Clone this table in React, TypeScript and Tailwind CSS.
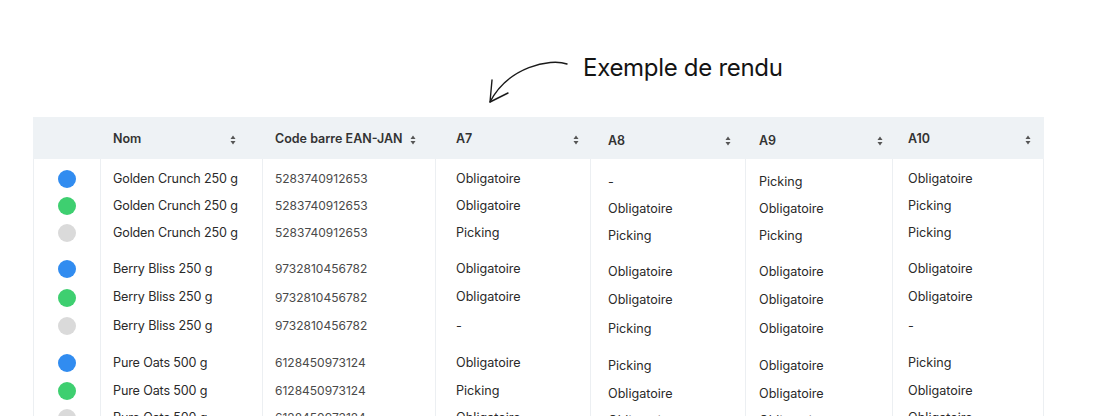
const rows = [
  { dot: "bg-[#318cf0]", name: "Golden Crunch 250 g", code: "5283740912653", v: ["Obligatoire", "-", "Picking", "Obligatoire"] },
  { dot: "bg-[#3ecf70]", name: "Golden Crunch 250 g", code: "5283740912653", v: ["Obligatoire", "Obligatoire", "Obligatoire", "Picking"] },
  { dot: "bg-[#dadada]", name: "Golden Crunch 250 g", code: "5283740912653", v: ["Picking", "Picking", "Picking", "Picking"] },
  { dot: "bg-[#318cf0]", name: "Berry Bliss 250 g", code: "9732810456782", v: ["Obligatoire", "Obligatoire", "Obligatoire", "Obligatoire"] },
  { dot: "bg-[#3ecf70]", name: "Berry Bliss 250 g", code: "9732810456782", v: ["Obligatoire", "Obligatoire", "Obligatoire", "Obligatoire"] },
  { dot: "bg-[#dadada]", name: "Berry Bliss 250 g", code: "9732810456782", v: ["-", "Picking", "Obligatoire", "-"] },
  { dot: "bg-[#318cf0]", name: "Pure Oats 500 g", code: "6128450973124", v: ["Obligatoire", "Picking", "Obligatoire", "Picking"] },
  { dot: "bg-[#3ecf70]", name: "Pure Oats 500 g", code: "6128450973124", v: ["Picking", "Obligatoire", "Obligatoire", "Obligatoire"] },
  { dot: "bg-[#dadada]", name: "Pure Oats 500 g", code: "6128450973124", v: ["Obligatoire", "Obligatoire", "Obligatoire", "Obligatoire"] },
]

// row heights + extra space before each group
const rowH = ["h-[28px]", "h-[26px]", "h-[28px]", "h-[28px]", "h-[29px]", "h-[28px]", "h-[28px]", "h-[28px]", "h-[26px]"]
const rowTop = ["mt-[6px]", "", "", "mt-[8px]", "", "", "mt-[9px]", "", ""]

const columns = [
  { w: "w-[68px]", pl: "pl-0", pr: "pr-0", label: "", shift: "" },
  { w: "w-[162px]", pl: "pl-[12px]", pr: "pr-[27px]", label: "Nom", shift: "" },
  { w: "w-[173px]", pl: "pl-[12px]", pr: "pr-[20px]", label: "Code barre EAN-JAN", shift: "" },
  { w: "w-[155px]", pl: "pl-[20px]", pr: "pr-[12px]", label: "A7", shift: "" },
  { w: "w-[155px]", pl: "pl-[17px]", pr: "pr-[15px]", label: "A8", shift: "pt-[3px]" },
  { w: "w-[147px]", pl: "pl-[13px]", pr: "pr-[10px]", label: "A9", shift: "pt-[3px]" },
  { w: "w-[151px]", pl: "pl-[15px]", pr: "pr-[13px]", label: "A10", shift: "" },
]

function SortIcon() {
  return (
    <svg width="6" height="10" viewBox="0 0 6 10" className="shrink-0">
      <path d="M3 0.5 L5.5 4 L0.5 4 Z" fill="#555" />
      <path d="M3 9.5 L5.5 6 L0.5 6 Z" fill="#555" />
    </svg>
  )
}

function cellText(row: (typeof rows)[number], col: number) {
  if (col === 1) return <span className="text-[#2a2a2a] tracking-[-0.15px]">{row.name}</span>
  if (col === 2) return <span className="text-[#4a4a4a] text-[12px]">{row.code}</span>
  return <span className="text-[#2a2a2a]">{row.v[col - 3]}</span>
}

export default function App() {
  return (
    <div className="h-[416px] w-[1104px] overflow-hidden bg-white font-['Inter',sans-serif]">
      <div className="flex h-[117px] items-start pl-[486px] pt-[53px]">
        <svg width="90" height="54" viewBox="0 0 90 54" fill="none" className="shrink-0">
          <path d="M81 11 C 64 5, 22 14, 4 49" stroke="#1a1a1a" strokeWidth="1.4" strokeLinecap="round" />
          <path d="M6 27 L4 49 L22 40" stroke="#1a1a1a" strokeWidth="1.4" strokeLinecap="round" strokeLinejoin="round" />
        </svg>
        <span className="ml-[7px] text-[24px] leading-[30px] tracking-[-0.3px] text-[#141414]">Exemple de rendu</span>
      </div>

      <div className="ml-[33px] w-[1011px]">
        <div className="flex h-[42px] bg-[#eef2f5] pt-[3px]">
          {columns.map((c, i) => (
            <div key={i} className={`${c.w} ${c.pl} ${c.pr} ${c.shift} flex shrink-0 items-center justify-between`}>
              {c.label && (
                <>
                  <span className="text-[12.5px] font-semibold text-[#333]">{c.label}</span>
                  <SortIcon />
                </>
              )}
            </div>
          ))}
        </div>

        <div className="flex">
          {columns.map((c, ci) => (
            <div
              key={ci}
              className={`${c.w} ${c.pl} ${c.shift} shrink-0 border-r border-[#eceff2] ${ci === 0 ? "border-l" : ""} pb-4`}
            >
              {rows.map((r, ri) => (
                <div key={ri} className={`${rowH[ri]} ${rowTop[ri]} flex items-center ${ci === 0 ? "justify-center" : ""} text-[12.6px]`}>
                  {ci === 0 ? <span className={`size-[18px] rounded-full ${r.dot}`} /> : cellText(r, ci)}
                </div>
              ))}
            </div>
          ))}
        </div>
      </div>
    </div>
  )
}
